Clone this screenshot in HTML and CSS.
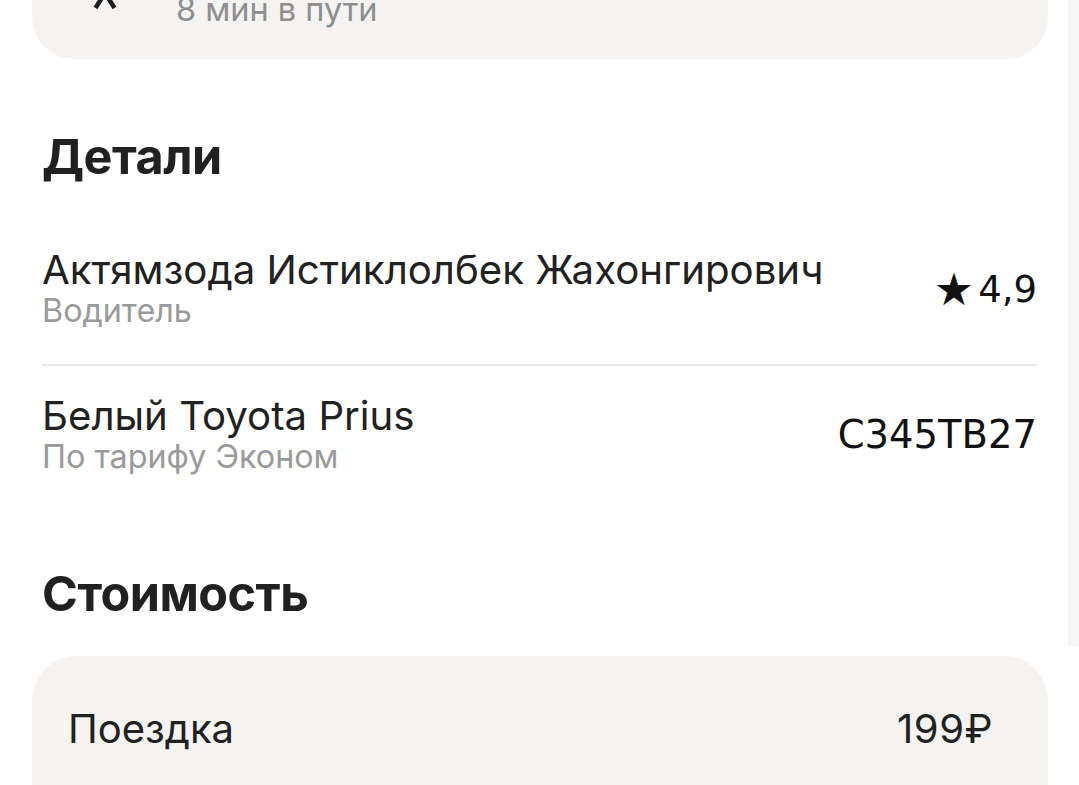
FILE: index.html
```html
<!DOCTYPE html>
<html lang="ru">
<head>
<meta charset="utf-8">
<link rel="stylesheet" href="styles.css">
</head>
<body>
<div class="scrollbar"></div>
<main class="page">
  <section class="card top-card">
    <div class="top-row">
      <span class="walk-icon">
        <svg width="24" height="40" viewBox="0 0 24 40"><path d="M12 3 L2.5 18 M12 3 L21.5 18" stroke="#1e1e1e" stroke-width="4.5" stroke-linecap="butt" fill="none"/></svg>
      </span>
      <span class="top-text">8 мин в пути</span>
    </div>
  </section>

  <h2 class="heading details-heading">Детали</h2>

  <div class="row first-row">
    <div class="row-main">
      <div class="title">Актямзода Истиклолбек Жахонгирович</div>
      <div class="subtitle">Водитель</div>
    </div>
    <div class="row-value rating"><span class="star">★</span><span>4,9</span></div>
  </div>
  <div class="divider"></div>
  <div class="row">
    <div class="row-main">
      <div class="title">Белый Toyota Prius</div>
      <div class="subtitle">По тарифу Эконом</div>
    </div>
    <div class="row-value plate">С345ТВ27</div>
  </div>

  <h2 class="heading cost-heading">Стоимость</h2>

  <section class="card cost-card">
    <div class="cost-row">
      <span>Поездка</span>
      <span class="price">199₽</span>
    </div>
  </section>
</main>
</body>
</html>
```
FILE: styles.css
```css
html, body {
  margin: 0;
  padding: 0;
  background: #fff;
  overflow: hidden;
  height: 785px;
}
body {
  font-family: "Inter", "Open Sans", sans-serif;
  color: #212121;
  position: relative;
}
.scrollbar {
  position: absolute;
  right: 0;
  top: 0;
  width: 11px;
  height: 646px;
  background: #f6f6f6;
}
.page {
  width: 1016px;
  margin-left: 32px;
  display: flex;
  flex-direction: column;
}
.card {
  background: #f4f3f1;
  border-radius: 42px;
}
.top-card {
  margin-top: -60px;
  height: 119px;
  display: flex;
  align-items: flex-start;
}
.top-row {
  display: flex;
  align-items: center;
  padding-top: 50px;
  padding-left: 61px;
  gap: 59px;
}
.walk-icon {
  width: 24px;
  height: 40px;
  display: flex;
}
.top-text {
  font-size: 32.5px;
  color: #8e8e8e;
  line-height: 40px;
}
.heading {
  margin: 0;
  padding-left: 10px;
  font-weight: 700;
  font-size: 48.5px;
  line-height: 60px;
  color: #212121;
  letter-spacing: -0.5px;
}
.details-heading {
  margin-top: 68px;
}
.first-row {
  margin-top: 61px;
}
.row {
  display: flex;
  align-items: center;
  justify-content: space-between;
  padding: 0 11px 0 10px;
}
.title {
  font-size: 40.2px;
  line-height: 44px;
  color: #212121;
}
.subtitle {
  font-size: 32.3px;
  line-height: 38px;
  color: #9a9a9a;
}
.row-value {
  font-family: "DejaVu Sans", sans-serif;
  font-size: 38.5px;
  line-height: 1;
  color: #111;
  display: flex;
  align-items: center;
}
.rating {
  font-size: 37px;
}
.star {
  font-size: 45px;
  line-height: 1;
  margin-right: 4px;
}
.divider {
  height: 2px;
  background: #e8e8e8;
  margin: 34px 11px 28px 10px;
}
.cost-heading {
  margin-top: 88px;
}
.cost-card {
  margin-top: 32px;
  height: 200px;
  border-radius: 44px;
}
.cost-row {
  display: flex;
  justify-content: space-between;
  align-items: center;
  padding: 51px 55px 0 36px;
  font-size: 40px;
  line-height: 44px;
}
.price {
  letter-spacing: 0.5px;
}
```
